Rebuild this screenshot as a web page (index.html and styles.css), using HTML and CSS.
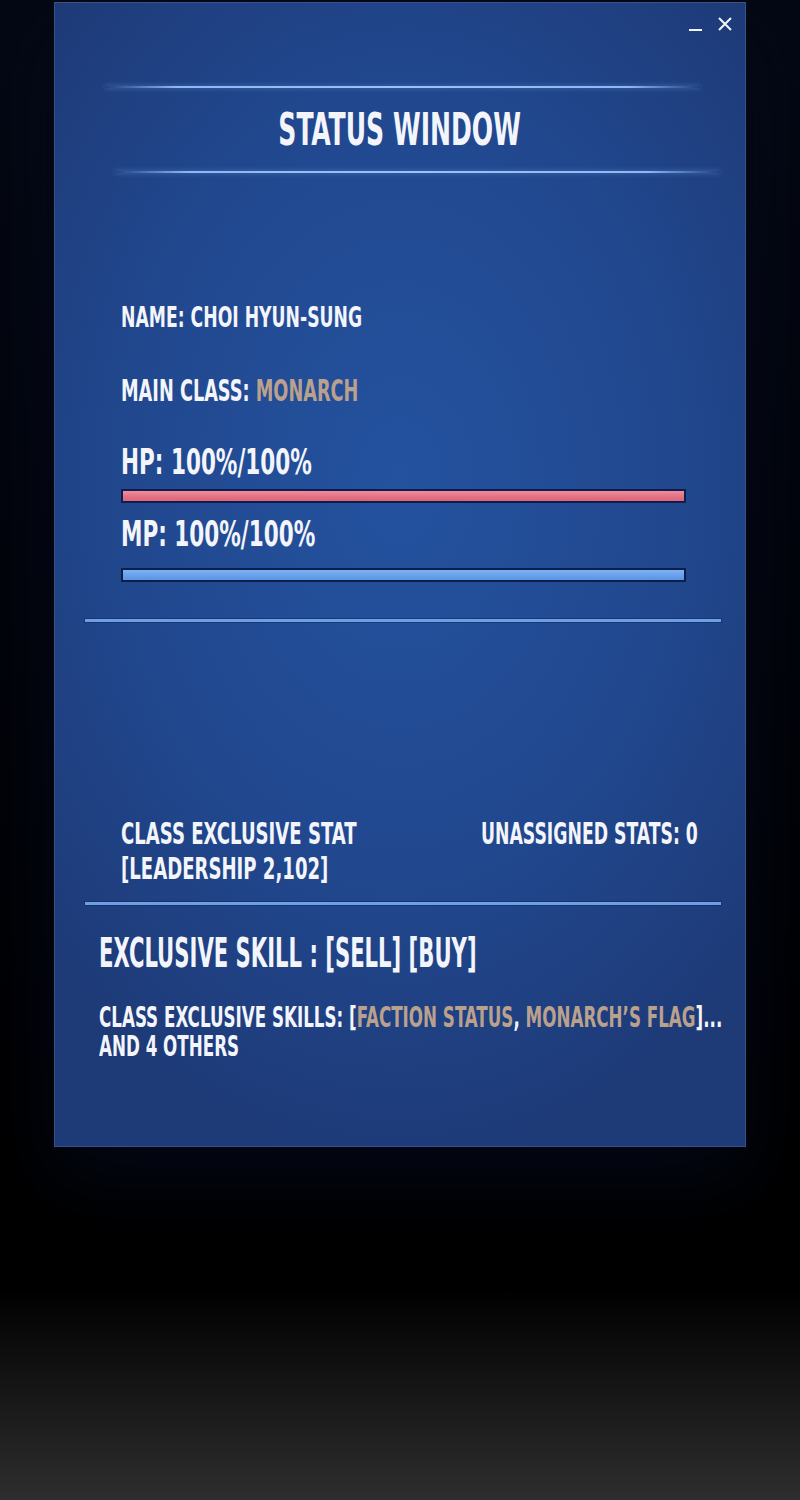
FILE: index.html
```html
<!DOCTYPE html>
<html lang="en">
  <head>
    <meta charset="UTF-8" />
    <title>Status Window</title>
    <link rel="stylesheet" href="styles.css">
  </head>

  <body>
    <div class="window">
      <div class="controls">
        <span class="min"></span>
        <svg class="close" width="14" height="14" viewBox="0 0 14 14">
          <path d="M1 1 L13 13 M13 1 L1 13" stroke="#f2f4fa" stroke-width="2" />
        </svg>
      </div>

      <div class="glow-line first"></div>
      <h1 class="title"><span>STATUS WINDOW</span></h1>
      <div class="glow-line second"></div>

      <p class="line name">NAME: CHOI HYUN-SUNG</p>
      <p class="line job">MAIN CLASS: <span class="accent">MONARCH</span></p>

      <p class="line gauge-label hp-label">HP: 100%/100%</p>
      <div class="bar hp-bar"><div class="fill hp" style="width: 100%"></div></div>

      <p class="line gauge-label mp-label">MP: 100%/100%</p>
      <div class="bar mp-bar"><div class="fill mp" style="width: 100%"></div></div>

      <hr class="divider top-divider">

      <div class="stats">
        <p class="line stat-left">CLASS EXCLUSIVE STAT<br>[LEADERSHIP 2,102]</p>
        <p class="line stat-right">UNASSIGNED STATS: 0</p>
      </div>

      <hr class="divider bottom-divider">

      <p class="line skill">EXCLUSIVE SKILL : [SELL] [BUY]</p>
      <p class="line skills">CLASS EXCLUSIVE SKILLS: [<span class="accent">FACTION STATUS</span>, <span class="accent">MONARCH’S FLAG</span>]...<br>AND 4 OTHERS</p>
    </div>
  </body>
</html>
```

FILE: styles.css
```css
body {
  margin: 0;
  min-height: 1500px;
  background: linear-gradient(#040814 0, #000 1200px, #000 1290px, #2e2e2e 1500px);
  font-family: "Liberation Sans Narrow", "DejaVu Sans Condensed", sans-serif;
  font-weight: bold;
  color: #f3f5fa;
}

.window {
  box-sizing: border-box;
  width: 692px;
  height: 1145px;
  margin: 2px 0 0 54px;
  border: 1px solid #35528c;
  background: radial-gradient(ellipse 70% 60% at 50% 42%, #24529f 0%, #21488f 55%, #1e3a77 100%);
  box-shadow: 0 30px 70px rgba(6, 12, 32, 0.7);
  overflow: hidden;
}

.controls {
  display: flex;
  justify-content: flex-end;
  align-items: flex-end;
  gap: 16px;
  padding: 14px 13px 0 0;
  height: 14px;
}

.min {
  width: 13px;
  height: 2px;
  background: #f2f4fa;
}

.glow-line {
  height: 2px;
  background: linear-gradient(to right, transparent, #8fb8f2 12%, #9cc3f6 50%, #8fb8f2 88%, transparent);
  box-shadow: 0 0 5px rgba(110, 160, 235, 0.6);
}

.glow-line.first {
  margin: 55px 45px 0 50px;
}

.glow-line.second {
  margin: 19px 25px 0 60px;
}

.title {
  margin: 19px 0 0;
  font-size: 45px;
  line-height: 1;
  text-align: center;
}

.title span {
  display: inline-block;
  transform: scaleX(0.62);
}

.line {
  margin: 0;
  line-height: 1;
  transform: scaleX(var(--sx, 0.67));
  transform-origin: left center;
  white-space: nowrap;
}

.accent {
  color: #baa18e;
}

.name {
  --sx: 0.684;
  margin: 131px 0 0 66px;
  font-size: 28px;
}

.job {
  --sx: 0.656;
  margin: 44px 0 0 66px;
  font-size: 30px;
}

.gauge-label {
  --sx: 0.665;
  font-size: 36px;
  margin-left: 66px;
}

.hp-label {
  margin-top: 38px;
}

.mp-label {
  margin-top: 13px;
}

.bar {
  box-sizing: border-box;
  height: 14px;
  margin: 0 59px 0 66px;
  border: 2px solid #0c1f4a;
  background: #0c1f4a;
}

.hp-bar {
  margin-top: 9px;
}

.mp-bar {
  margin-top: 16px;
}

.fill {
  height: 100%;
}

.fill.hp {
  background: linear-gradient(#ef8d9c, #e46f82 60%, #dc6678);
}

.fill.mp {
  background: linear-gradient(#7fb2f3, #66a0ec 60%, #5c95e2);
}

.divider {
  height: 3px;
  margin: 0 24px 0 30px;
  border: 0;
  background: #6e9fe2;
  box-shadow: 0 0 0 1px rgba(12, 35, 90, 0.45);
}

.top-divider {
  margin-top: 37px;
}

.bottom-divider {
  margin-top: 16px;
}

.stats {
  display: grid;
  grid-template-columns: 360px 1fr;
  margin: 194px 0 0 66px;
}

.stats .line {
  min-width: 0;
  font-size: 30px;
  line-height: 35px;
}

.stat-left {
  --sx: 0.67;
}

.stat-right {
  --sx: 0.64;
}

.skill {
  --sx: 0.588;
  margin: 28px 0 0 44px;
  font-size: 40px;
}

.skills {
  --sx: 0.664;
  margin: 30px 0 0 44px;
  font-size: 28px;
  line-height: 29px;
}
```
